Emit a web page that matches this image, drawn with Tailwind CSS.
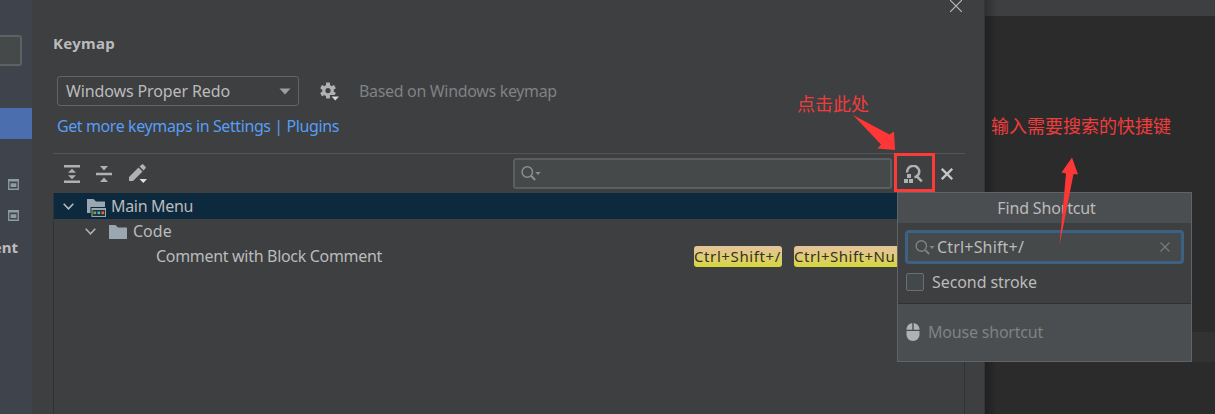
<!DOCTYPE html>
<html lang="en">
<head>
<meta charset="utf-8">
<title>Keymap</title>
<script src="https://cdn.jsdelivr.net/npm/@tailwindcss/browser@4"></script>
</head>
<body class="w-[1215px] h-[414px] overflow-hidden bg-[#2b2b2b] font-['Noto_Sans','Noto_Sans_CJK_SC',sans-serif] text-[16px] leading-[25px] text-[#bbbbbb]">
<div class="relative flex h-full w-full overflow-hidden whitespace-nowrap">

  <!-- Settings categories -->
  <aside class="flex h-full w-8 shrink-0 flex-col bg-[#3e434c]">
    <div class="mt-[35px] h-[31px] w-[22px] rounded-r-[3px] border-2 border-l-0 border-[#5e6163] bg-[#45494a]"></div>
    <div class="mt-[42px] h-[31px] w-8 bg-[#4b6eaf]"></div>
    <svg class="mt-10 ml-2 h-[11px] w-[11px]" viewBox="0 0 11 11"><path d="M.75.75h9.5v9.5H.75z" fill="none" stroke="#8f9ba3" stroke-width="1.3"/><path d="M0 0h11v2.6H0zM2.6 4.3h5.8v3.6H2.6z" fill="#8f9ba3"/></svg>
    <svg class="mt-5 ml-2 h-[11px] w-[11px]" viewBox="0 0 11 11"><path d="M.75.75h9.5v9.5H.75z" fill="none" stroke="#8f9ba3" stroke-width="1.3"/><path d="M0 0h11v2.6H0zM2.6 4.3h5.8v3.6H2.6z" fill="#8f9ba3"/></svg>
    <div class="mt-[14px] flex w-[18px] justify-end overflow-hidden text-[15px] font-bold"><span>ent</span></div>
  </aside>

  <!-- Keymap page -->
  <main class="flex h-full w-[953px] shrink-0 flex-col border-r border-[#353637] bg-[#3d3f41] pr-[19px] pl-[21px]">
    <h1 class="mt-[31px] text-[15px] font-bold tracking-[0.3px]">Keymap</h1>
    <div class="mt-5 ml-1 flex h-[30px] items-center">
      <div class="flex h-[30px] w-[242px] items-center justify-between rounded-[3px] border border-[#646464] pr-[7px] pl-2">
        <span class="tracking-[-0.12px]">Windows Proper Redo</span>
        <svg class="h-[7px] w-3" viewBox="0 0 12 7"><path d="M.5.5h11L6 6.5z" fill="#9c9fa1"/></svg>
      </div>
      <svg class="ml-5 h-5 w-5" viewBox="0 0 20 20"><g fill="#afb1b3"><path fill-rule="evenodd" d="M9 3.8a5.8 5.8 0 1 1 0 11.6A5.8 5.8 0 0 1 9 3.8m0 3.2a2.6 2.6 0 1 0 0 5.2A2.6 2.6 0 0 0 9 7"/><path d="M7.2 1.6h3.6l.4 3H6.8z"/><path d="M7.2 17.6h3.6l.4-3H6.8z"/><path d="M7.2 1.6h3.6l.4 3H6.8z" transform="rotate(60 9 9.6)"/><path d="M7.2 1.6h3.6l.4 3H6.8z" transform="rotate(120 9 9.6)"/><path d="M7.2 1.6h3.6l.4 3H6.8z" transform="rotate(240 9 9.6)"/><path d="M7.2 1.6h3.6l.4 3H6.8z" transform="rotate(300 9 9.6)"/></g><path d="M10.5 14h10v6h-5z" fill="#3d3f41"/><path d="M12.5 15.500H20l-3.750 4z" fill="#d6d8da"/></svg>
      <span class="ml-5 tracking-[-0.33px] text-[#808284]">Based on Windows keymap</span>
    </div>
    <div class="mt-2 ml-1 tracking-[-0.4px] text-[#589df6]">Get more keymaps in Settings | Plugins</div>

    <div class="mt-[14px] flex h-10 shrink-0 items-center border-t border-[#515355]">
      <svg class="ml-[11px] h-[18px] w-4" viewBox="0 0 16 18"><path d="M0 0h16v2.600H0zM0 15.400h16V18H0zM8 3.800l4 4H4zM8 14.200l4-4H4z" fill="#afb1b3"/></svg>
      <svg class="ml-4 h-[18px] w-4" viewBox="0 0 16 18"><path d="M0 7.700h16v2.600H0zM4 1h8L8 5.500zM4 17h8l-4-4.500z" fill="#afb1b3"/></svg>
      <svg class="ml-[17px] h-[19px] w-[18px]" viewBox="0 0 18 19"><path d="M0 17v-4L9.500 3.500l4 4L4 17zM10.600 2.400 12.700.5q.8-.6 1.600 0L16.500 2.700q.6.800 0 1.600L14.600 6.400z" fill="#afb1b3"/><path d="M10.500 15H18l-3.750 4z" fill="#dfe1e3"/></svg>
      <div class="ml-[366px] flex h-[31px] w-[379px] items-center rounded-[3px] border-2 border-[#5c5f60] bg-[#45494a] pl-[6px]">
        <svg class="h-[15px] w-5" viewBox="0 0 20 15"><circle cx="6.300" cy="6" r="5.200" fill="none" stroke="#8b8f91" stroke-width="1.500"/><path d="m10 9.800 4.200 4.200" stroke="#8b8f91" stroke-width="2"/><path d="M14.300 6h5.400L17 9z" fill="#8b8f91"/></svg>
      </div>
      <svg class="ml-3 h-[18px] w-[19px]" viewBox="0 0 19 18"><path d="M3.300 7.500A6 5.800 0 1 1 10.500 12.300M12.500 11l5.300 5.300" fill="none" stroke="#afb1b3" stroke-width="2.500"/><path d="M3 9h4v4H3zM0 14h4v4H0zM5 14h4v4H5z" fill="#afb1b3"/></svg>
      <svg class="ml-[18px] h-3 w-3" viewBox="0 0 12 12"><path d="m.8.800 10.400 10.400M11.200.800.8 11.200" stroke="#c3c5c7" stroke-width="2.300"/></svg>
    </div>

    <div class="flex min-h-0 flex-1 flex-col border-r border-l border-[#303234]">
      <div class="flex h-[26px] items-center bg-[#0d293e] pl-[9px]">
        <svg class="h-[7px] w-[11px]" viewBox="0 0 11 7"><path d="m.7.800 4.800 5 4.800-5" fill="none" stroke="#b4bcc2" stroke-width="1.600"/></svg>
        <svg class="mt-[3px] ml-[13px] h-[18px] w-[19px]" viewBox="0 0 19 18"><path d="M0 0h6.500L9 2.500h9V8H3.500v6H0z" fill="#9aa7b0"/><path d="M4.500 9H19v9H4.500z" fill="#9aa7b0"/><path d="M5.500 11h12.500v6H5.500z" fill="#26323b"/><path d="M6.500 12.500h2.600v2.600H6.500z" fill="#62b543"/><path d="M10.500 12.500h2.600v2.600h-2.600z" fill="#40b6e0"/><path d="M14.500 12.500h2.600v2.600h-2.600z" fill="#f26522"/></svg>
        <span class="ml-[5px] tracking-[-0.33px]">Main Menu</span>
      </div>
      <div class="flex h-[25px] items-center pl-[31px]">
        <svg class="h-[7px] w-[11px]" viewBox="0 0 11 7"><path d="m.7.800 4.800 5 4.800-5" fill="none" stroke="#afb1b3" stroke-width="1.600"/></svg>
        <svg class="ml-[13px] h-[14px] w-[18px]" viewBox="0 0 18 14"><path d="M0 0h6.500L9 2.500h9V14H0z" fill="#9aa7b0"/></svg>
        <span class="ml-[6px]">Code</span>
      </div>
      <div class="flex h-[25px] items-center pl-[102px]">
        <span class="w-[538px] tracking-[-0.31px]">Comment with Block Comment</span>
        <span class="h-[21px] w-[88px] rounded-[3px] bg-linear-to-b from-[#e6c29c] to-[#d6d736] text-[15px] leading-[21px] tracking-[0.6px] text-[#3a3020]">Ctrl+Shift+/</span>
        <span class="ml-3 h-[21px] w-[120px] overflow-hidden rounded-[3px] bg-linear-to-b from-[#e6c29c] to-[#d6d736] text-[15px] leading-[21px] tracking-[0.5px] text-[#3a3020]">Ctrl+Shift+Nu</span>
      </div>
    </div>
  </main>

  <!-- Editor behind the dialog -->
  <div class="flex h-full flex-1 flex-col bg-[#2b2b2b]">
    <div class="h-4 bg-[#3d3f41]"></div>
    <div class="mt-[316px] h-[30px] bg-[#323232]"></div>
  </div>
  <div class="absolute top-0 left-[985px] h-full w-3 bg-linear-to-r from-black/25 to-transparent"></div>

  <!-- Dialog close button -->
  <svg class="absolute top-0 left-[950px] h-3 w-3" viewBox="0 0 12 12"><path d="m0 0 12 12M12 0 0 12" stroke="#b9bbbd" stroke-width="1.200"/></svg>

  <!-- Find shortcut popup -->
  <section class="absolute top-[192px] left-[897px] flex h-[170px] w-[295px] flex-col border border-[#616365] bg-[#3d3f41]">
    <div class="flex h-[30px] items-center justify-center bg-[#4a4e50] pl-1"><span class="tracking-[-0.15px]">Find Shortcut</span></div>
    <div class="mt-[7px] ml-[7px] flex h-[34px] w-[279px] items-center rounded-[4px] border-[3px] border-[#3d6185] bg-[#45494a] pr-[11px] pl-[7px]">
      <svg class="h-[15px] w-5" viewBox="0 0 20 15"><circle cx="6.300" cy="6" r="5.200" fill="none" stroke="#7f8385" stroke-width="1.400"/><path d="m10 9.800 4.200 4.200" stroke="#7f8385" stroke-width="1.800"/><path d="M14.300 6h5.400L17 9z" fill="#7f8385"/></svg>
      <span class="ml-[2px] tracking-[0.17px]">Ctrl+Shift+/</span>
      <svg class="ml-auto h-[10px] w-[10px]" viewBox="0 0 10 10"><path d="m.5.500 9 9M9.500.500l-9 9" stroke="#77797b" stroke-width="1.200"/></svg>
    </div>
    <div class="mt-[9px] ml-2 flex h-[18px] items-center">
      <div class="h-[18px] w-[18px] rounded-[2px] border border-[#6b6d6e] bg-[#43494a]"></div>
      <span class="ml-2 tracking-[-0.08px]">Second stroke</span>
    </div>
    <div class="mt-3 flex flex-1 items-center border-t border-[#2f3133] bg-[#4a4e50] pl-2">
      <svg class="mb-[2px] h-[18px] w-[14px]" viewBox="0 0 14 18"><path d="M6.300 0v6.700H.5V6Q1 .8 6.300 0M7.700 0v6.700h5.800V6Q13 .8 7.700 0M.5 8h13v4Q13 17.600 7 18 1 17.600.5 12z" fill="#afb1b3"/></svg>
      <span class="ml-2 tracking-[-0.2px] text-[#808284]">Mouse shortcut</span>
    </div>
  </section>

  <!-- Annotations -->
  <div class="absolute top-[153px] left-[894px] h-[39px] w-[41px] border-[3px] border-[#fb3a3a]"></div>
  <svg class="absolute top-0 left-0 h-full w-full" viewBox="0 0 1215 414"><g fill="#fd3636"><path d="M853 115 889.500 134.500 894 131.500 895 150 877.500 148.500 881 144.500z"/><path d="M1072 157.500 1078 174.500 1073.500 174 1059.500 245.500 1066 173.500 1061.500 172.500z"/></g></svg>
  <div class="absolute top-[92px] left-[797px] text-[18px] text-[#f03c3c]">点击此处</div>
  <div class="absolute top-[114px] left-[991px] text-[18px] text-[#f03c3c]">输入需要搜索的快捷键</div>
</div>
</body>
</html>
